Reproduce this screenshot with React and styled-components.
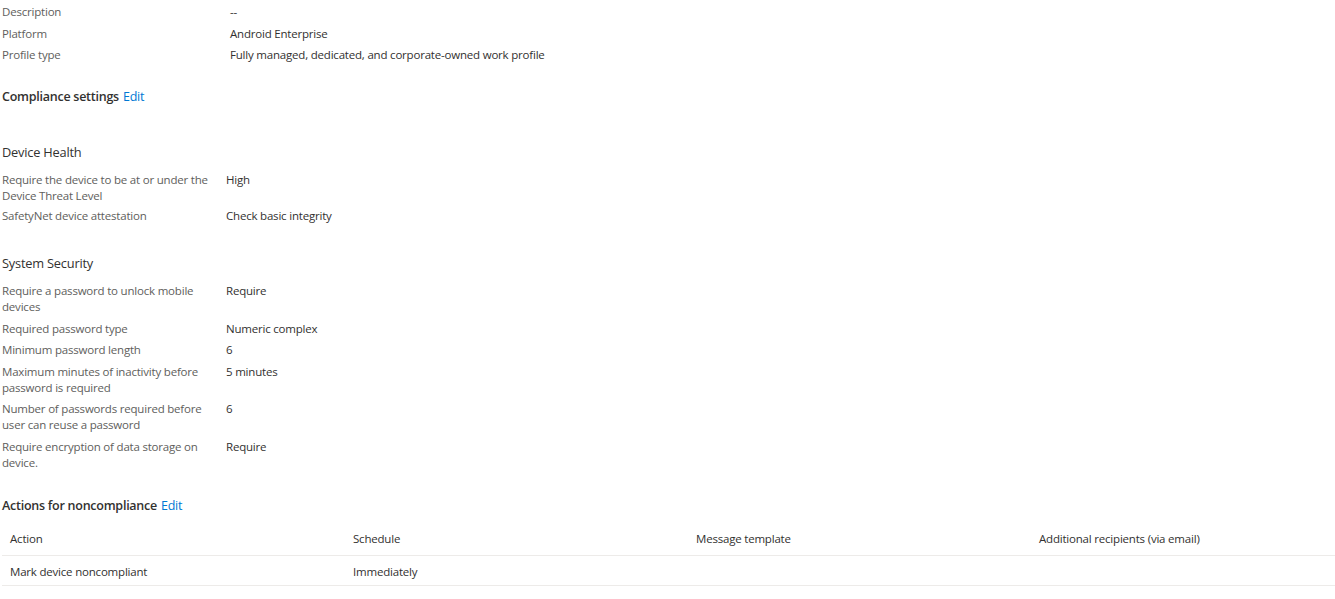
import { Fragment } from "react";
import styled, { createGlobalStyle } from "styled-components";

const GlobalStyle = createGlobalStyle`
  body {
    margin: 0;
    background: #fff;
    font-family: "Open Sans", "Noto Sans", sans-serif;
    color: #323130;
    overflow: hidden;
  }
`;

const Page = styled.div`
  padding: 4px 0 0 2px;
  width: 1333px;
  overflow: hidden;
`;

const InfoGrid = styled.div`
  display: grid;
  grid-template-columns: 228px 1fr;
  row-gap: 5.5px;
  font-size: 11.5px;
  letter-spacing: -0.2px;
  line-height: 16px;
`;

const Label = styled.div`
  color: #605e5c;
`;

const Value = styled.div`
  color: #323130;
`;

const SectionTitle = styled.div`
  display: flex;
  gap: 4px;
  margin-top: ${(p) => p.$top}px;
  font-size: 12.5px;
  font-weight: 600;
  letter-spacing: -0.25px;
  line-height: 18px;
`;

const EditLink = styled.a`
  color: #0078d4;
  font-weight: 400;
  cursor: pointer;
`;

const GroupTitle = styled.div`
  margin-top: ${(p) => p.$top}px;
  margin-bottom: 11px;
  font-size: 12.8px;
  letter-spacing: -0.2px;
  line-height: 18px;
`;

const SettingsGrid = styled.div`
  display: grid;
  grid-template-columns: 214px 1fr;
  column-gap: 10px;
  row-gap: ${(p) => p.$gap}px;
  font-size: 11.5px;
  letter-spacing: -0.2px;
  line-height: 16px;
`;

const Table = styled.div`
  width: 1372px;
  margin-top: 9px;
  font-size: 11.5px;
  letter-spacing: -0.2px;
  color: #323130;
`;

const TableRow = styled.div`
  display: grid;
  grid-template-columns: repeat(4, 343px);
  align-items: center;
  box-sizing: border-box;
  height: ${(p) => (p.$head ? 32 : 30)}px;
  padding-top: ${(p) => (p.$head ? 0 : 3)}px;
  border-bottom: 1px solid #edebe9;
`;

const Cell = styled.div`
  padding-left: 8px;
  line-height: 16px;
`;

const info = [
  ["Description", "--"],
  ["Platform", "Android Enterprise"],
  ["Profile type", "Fully managed, dedicated, and corporate-owned work profile"],
];

const deviceHealth = [
  ["Require the device to be at or under the Device Threat Level", "High"],
  ["SafetyNet device attestation", "Check basic integrity"],
];

const systemSecurity = [
  ["Require a password to unlock mobile devices", "Require"],
  ["Required password type", "Numeric complex"],
  ["Minimum password length", "6"],
  ["Maximum minutes of inactivity before password is required", "5 minutes"],
  ["Number of passwords required before user can reuse a password", "6"],
  ["Require encryption of data storage on device.", "Require"],
];

const columns = ["Action", "Schedule", "Message template", "Additional recipients (via email)"];
const actions = [["Mark device noncompliant", "Immediately", "", ""]];

const Settings = ({ rows, gap }) => (
  <SettingsGrid $gap={gap}>
    {rows.map(([l, v]) => (
      <Fragment key={l}>
        <Label>{l}</Label>
        <Value>{v}</Value>
      </Fragment>
    ))}
  </SettingsGrid>
);

export default function App() {
  return (
    <Page>
      <GlobalStyle />
      <InfoGrid>
        {info.map(([l, v]) => (
          <Fragment key={l}>
            <Label>{l}</Label>
            <Value>{v}</Value>
          </Fragment>
        ))}
      </InfoGrid>

      <SectionTitle $top={25}>
        Compliance settings <EditLink>Edit</EditLink>
      </SectionTitle>

      <GroupTitle $top={37}>Device Health</GroupTitle>
      <Settings rows={deviceHealth} gap={4} />

      <GroupTitle $top={30}>System Security</GroupTitle>
      <Settings rows={systemSecurity} gap={5.6} />

      <SectionTitle $top={26}>
        Actions for noncompliance <EditLink>Edit</EditLink>
      </SectionTitle>
      <Table>
        <TableRow $head>
          {columns.map((c) => (
            <Cell key={c}>{c}</Cell>
          ))}
        </TableRow>
        {actions.map((row) => (
          <TableRow key={row[0]}>
            {row.map((c, i) => (
              <Cell key={i}>{c}</Cell>
            ))}
          </TableRow>
        ))}
      </Table>
    </Page>
  );
}
